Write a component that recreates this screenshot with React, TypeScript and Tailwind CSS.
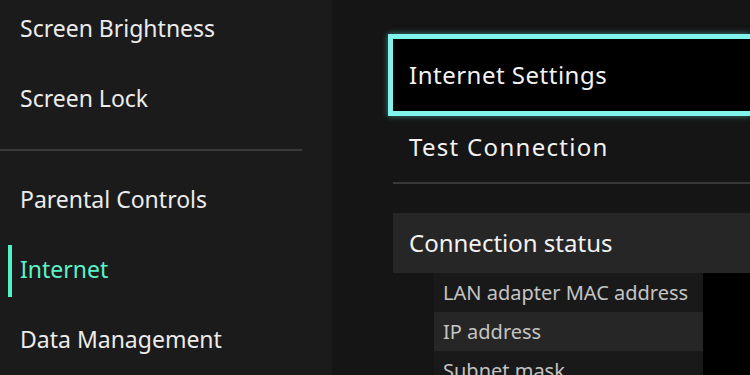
import React from "react";

const font = { fontFamily: '"Noto Sans", "Open Sans", sans-serif' };

function LeftItem({ label, active }: { label: string; active?: boolean }) {
  return (
    <div className="relative h-[70px] flex items-center pl-[20px] pb-[2px]">
      {active && (
        <div className="absolute left-[8px] top-[10px] h-[52px] w-[4px] bg-[#4ef2c6]" />
      )}
      <span className={"text-[23px] " + (active ? "text-[#5cf2c9]" : "text-[#ececec]")}>{label}</span>
    </div>
  );
}

export default function App() {
  return (
    <div className="flex h-[375px] w-[750px] overflow-hidden bg-[#151515]" style={font}>
      <aside className="w-[332px] shrink-0 bg-[#1b1b1b]">
        <div className="-mt-[6px]">
          <LeftItem label="Screen Brightness" />
          <LeftItem label="Screen Lock" />
          <div className="mt-[15px] mb-[14px] h-[2px] w-[302px] bg-[#3a3a3a]" />
          <LeftItem label="Parental Controls" />
          <LeftItem label="Internet" active />
          <LeftItem label="Data Management" />
        </div>
      </aside>
      <main className="flex-1 pt-[34px] pl-[56px]">
        <div className="h-[82px] border-[5px] border-r-0 border-[#7ff3ec] bg-black flex items-center pl-[16px] shadow-[0_0_6px_rgba(110,240,230,0.5)]">
          <span className="text-[24px] tracking-[0.5px] text-[#f2f2f2]">Internet Settings</span>
        </div>
        <div className="ml-[5px] h-[66px] flex items-center pl-[16px] pb-[5px]">
          <span className="text-[24px] tracking-[1.3px] text-[#f2f2f2]">Test Connection</span>
        </div>
        <div className="ml-[5px] h-[2px] bg-[#393939]" />
        <div className="ml-[5px] mt-[29px] h-[60px] bg-[#262626] flex items-center pl-[16px]">
          <span className="text-[24px] text-[#f2f2f2]">Connection status</span>
        </div>
        <div className="flex">
          <div className="ml-[46px] w-[269px] bg-[#191919]">
            <div className="h-[39px] flex items-center pl-[9px]">
              <span className="text-[20px] text-[#c4c4c4]">LAN adapter MAC address</span>
            </div>
            <div className="h-[39px] flex items-center pl-[9px] bg-[#262626]">
              <span className="text-[20px] text-[#c4c4c4]">IP address</span>
            </div>
            <div className="h-[39px] flex items-center pl-[9px]">
              <span className="text-[20px] text-[#c4c4c4]">Subnet mask</span>
            </div>
          </div>
          <div className="flex-1 bg-black" />
        </div>
      </main>
    </div>
  );
}
